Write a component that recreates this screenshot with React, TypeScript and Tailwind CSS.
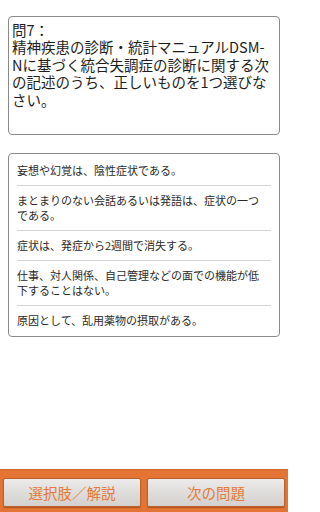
const choices = [
  "妄想や幻覚は、陰性症状である。",
  "まとまりのない会話あるいは発語は、症状の一つである。",
  "症状は、発症から2週間で消失する。",
  "仕事、対人関係、自己管理などの面での機能が低下することはない。",
  "原因として、乱用薬物の摂取がある。"
];

const App = () => {
  return (
    <div
      className="flex h-[512px] w-[288px] flex-col bg-white"
      style={{ fontFamily: '"Noto Sans CJK JP", "Noto Sans", sans-serif' }}
    >
      {/* question */}
      <div className="mx-[8px] mt-[16px] h-[119px] rounded-[4px] border border-[#8a8a8a] px-[3px] pt-[4px]">
        <p className="whitespace-nowrap text-[14.5px] leading-[17.4px] text-[#1e1e1e]">
          問7：
          <br />
          精神疾患の診断・統計マニュアルDSM-
          <br />
          Nに基づく統合失調症の診断に関する次
          <br />
          の記述のうち、正しいものを1つ選びな
          <br />
          さい。
        </p>
      </div>

      {/* choices */}
      <div className="mx-[8px] mt-[18px] rounded-[4px] border border-[#8a8a8a] px-[8px] pb-[1px] pt-[2px]">
        {choices.map((choice, i) => (
          <div
            key={choice}
            className={
              i < choices.length - 1
                ? "border-b border-[#d4d4d4] py-[7px] pr-[10px] text-[11px] leading-[15px] text-[#2a2a2a]"
                : "py-[7px] pr-[10px] text-[11px] leading-[15px] text-[#2a2a2a]"
            }
          >
            {choice}
          </div>
        ))}
      </div>

      <div className="flex-1" />

      {/* bottom bar */}
      <div className="flex h-[43px] gap-[6px] border-t border-[#d0652a] bg-[#e37434] px-[3px] pt-[8px]">
        <button className="flex h-[29px] flex-1 items-center justify-center rounded-[2px] border border-[#b9622e] bg-gradient-to-b from-[#ecebe9] to-[#d3d0cd] text-[14.5px] text-[#e27a3c] shadow-[0_1px_1px_rgba(120,50,10,0.5)]">
          選択肢／解説
        </button>
        <button className="flex h-[29px] flex-1 items-center justify-center rounded-[2px] border border-[#b9622e] bg-gradient-to-b from-[#ecebe9] to-[#d3d0cd] text-[14.5px] text-[#e27a3c] shadow-[0_1px_1px_rgba(120,50,10,0.5)]">
          次の問題
        </button>
      </div>
    </div>
  );
};

export default App;
